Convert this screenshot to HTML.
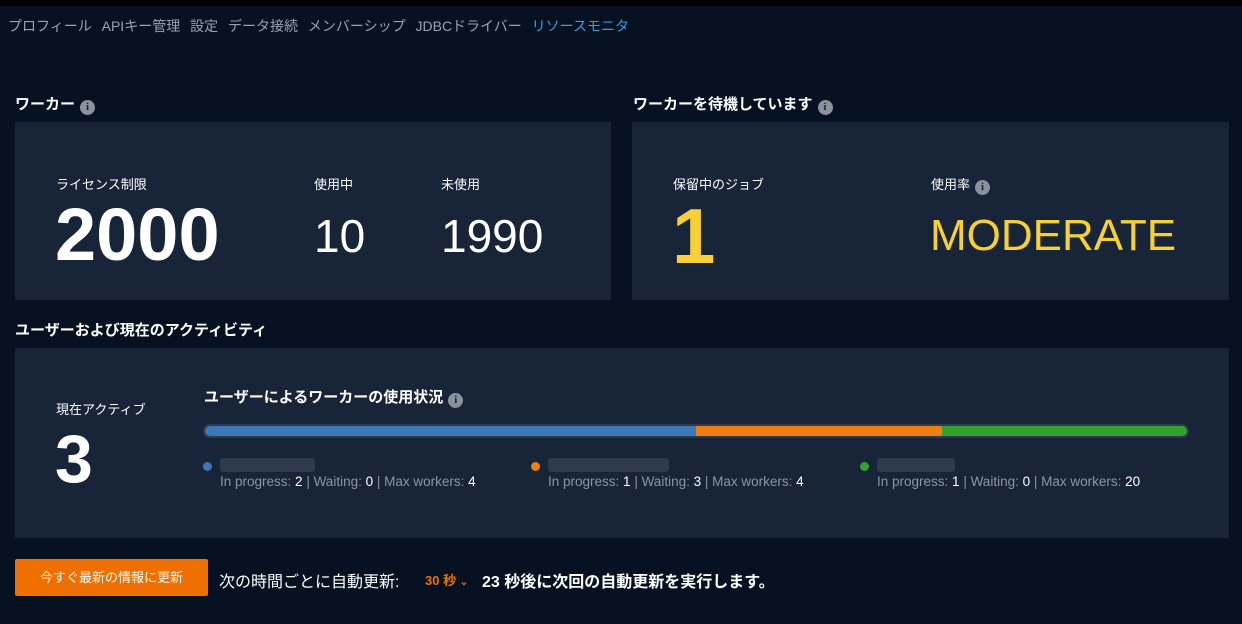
<!DOCTYPE html>
<html><head><meta charset="utf-8"><style>
*{margin:0;padding:0;box-sizing:border-box}
body{width:1242px;height:624px;background:#061222;font-family:"Liberation Sans","Noto Sans CJK JP",sans-serif;color:#fff;position:relative;overflow:hidden}
.top{position:absolute;left:0;top:0;width:1242px;height:6px;background:#000}
.nav{position:absolute;left:8px;top:16px;font-size:14px;color:#9aa3ad;white-space:nowrap}
.nav span{margin-right:6px}
.nav .a{color:#3d9be0}
.abs{position:absolute;white-space:nowrap}
.card{position:absolute;background:#182539}
.h{font-size:15px;font-weight:bold}
.i{display:inline-block;width:15px;height:15px;border-radius:50%;background:#8a929d;color:#182539;font-size:11px;font-weight:bold;text-align:center;line-height:15px;vertical-align:-1px;margin-left:5px;font-family:"Liberation Serif",serif}
.lab{font-size:13px}
.leg{font-size:13.5px;color:#8a96a6}
.leg b{color:#fff;font-weight:normal}
.dot{position:absolute;width:9px;height:9px;border-radius:50%}
.blur{position:absolute;height:14px;background:#2e3b4e;border-radius:3px}
</style></head><body>
<div class="top"></div>
<div class="nav"><span>プロフィール</span> <span>APIキー管理</span> <span>設定</span> <span>データ接続</span> <span>メンバーシップ</span> <span>JDBCドライバー</span> <span class="a">リソースモニタ</span></div>

<div class="abs h" style="left:15px;top:93px">ワーカー<span class="i">i</span></div>
<div class="abs h" style="left:633px;top:93px">ワーカーを待機しています<span class="i">i</span></div>

<div class="card" style="left:15px;top:122px;width:596px;height:178px"></div>
<div class="abs lab" style="left:56px;top:174px">ライセンス制限</div>
<div class="abs" style="left:55px;top:195px;font-size:74px;font-weight:bold;line-height:80px">2000</div>
<div class="abs lab" style="left:314px;top:174px">使用中</div>
<div class="abs" style="left:314px;top:210px;font-size:46px;line-height:52px">10</div>
<div class="abs lab" style="left:441px;top:174px">未使用</div>
<div class="abs" style="left:441px;top:210px;font-size:46px;line-height:52px">1990</div>

<div class="card" style="left:632px;top:122px;width:597px;height:178px"></div>
<div class="abs lab" style="left:673px;top:174px">保留中のジョブ</div>
<div class="abs" style="left:672px;top:194px;font-size:78px;font-weight:bold;color:#f7d033;line-height:84px">1</div>
<div class="abs lab" style="left:931px;top:174px">使用率<span class="i">i</span></div>
<div class="abs" style="left:930px;top:210px;font-size:44px;color:#f7d033;line-height:52px">MODERATE</div>

<div class="abs h" style="left:15px;top:319px">ユーザーおよび現在のアクティビティ</div>
<div class="card" style="left:15px;top:348px;width:1214px;height:190px"></div>
<div class="abs lab" style="left:56px;top:399px">現在アクティブ</div>
<div class="abs" style="left:55px;top:422px;font-size:68px;font-weight:bold;line-height:74px">3</div>
<div class="abs h" style="left:204px;top:386px">ユーザーによるワーカーの使用状況<span class="i">i</span></div>
<div class="abs" style="left:203px;top:424px;width:986px;height:14px;border-radius:7px;background:#2e3b4e;padding:2px;display:flex">
 <div style="width:491px;background:#3c78b8;border-radius:5px 0 0 5px"></div>
 <div style="width:246px;background:#ef7f15"></div>
 <div style="flex:1;background:#34a02e;border-radius:0 5px 5px 0"></div>
</div>
<div class="dot" style="left:203px;top:462px;background:#3c78b8"></div>
<div class="blur" style="left:220px;top:458px;width:95px"></div>
<div class="abs leg" style="left:220px;top:474px">In progress: <b>2</b> | Waiting: <b>0</b> | Max workers: <b>4</b></div>
<div class="dot" style="left:531px;top:462px;background:#ef7f15"></div>
<div class="blur" style="left:548px;top:458px;width:121px"></div>
<div class="abs leg" style="left:548px;top:474px">In progress: <b>1</b> | Waiting: <b>3</b> | Max workers: <b>4</b></div>
<div class="dot" style="left:860px;top:462px;background:#34a02e"></div>
<div class="blur" style="left:877px;top:458px;width:78px"></div>
<div class="abs leg" style="left:877px;top:474px">In progress: <b>1</b> | Waiting: <b>0</b> | Max workers: <b>20</b></div>

<div class="abs" style="left:15px;top:559px;width:193px;height:37px;background:#ef7000;border-radius:2px;font-size:13px;text-align:center;line-height:37px">今すぐ最新の情報に更新</div>
<div class="abs" style="left:219px;top:568px;font-size:16px">次の時間ごとに自動更新:</div>
<div class="abs" style="left:425px;top:570px;font-size:13px;color:#ef7000;font-weight:bold">30 秒 <span style="font-size:10px">⌄</span></div>
<div class="abs" style="left:482px;top:568px;font-size:16px;font-weight:bold">23 秒後に次回の自動更新を実行します。</div>
</body></html>
